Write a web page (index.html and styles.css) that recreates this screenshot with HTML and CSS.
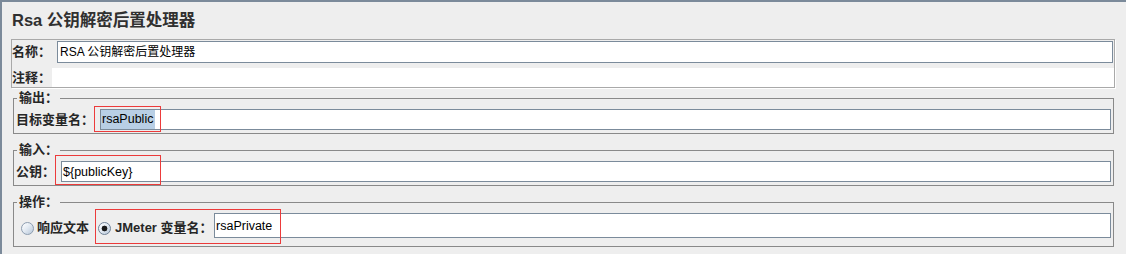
FILE: index.html
```html
<!DOCTYPE html>
<html lang="zh-CN">
<head>
<meta charset="utf-8">
<title>Rsa 公钥解密后置处理器</title>
<link rel="stylesheet" href="styles.css">
</head>
<body>
<div class="page">
  <h1 class="title">Rsa 公钥解密后置处理器</h1>

  <div class="name-panel">
    <div class="row row-name">
      <span class="lbl lbl-name">名称：</span>
      <div class="field field-name"><span class="val">RSA 公钥解密后置处理器</span></div>
    </div>
    <div class="row row-comment">
      <span class="lbl lbl-comment">注释：</span>
      <div class="comment"></div>
    </div>
  </div>

  <fieldset class="group group-first">
    <legend class="legend">输出：</legend>
    <div class="row">
      <span class="lbl lbl-target">目标变量名：</span>
      <div class="field field-sel"><span class="val sel">rsaPublic</span></div>
    </div>
  </fieldset>

  <fieldset class="group">
    <legend class="legend">输入：</legend>
    <div class="row">
      <span class="lbl lbl-key">公钥：</span>
      <div class="field"><span class="val">${publicKey}</span></div>
    </div>
  </fieldset>

  <fieldset class="group">
    <legend class="legend">操作：</legend>
    <div class="row row-op">
      <span class="radio radio-first"></span>
      <span class="lbl opt-text">响应文本</span>
      <span class="radio radio-checked radio-second"></span>
      <span class="lbl opt-text opt-var">JMeter 变量名：</span>
      <div class="field field-tall"><span class="val">rsaPrivate</span></div>
    </div>
  </fieldset>
</div>

<div class="mark mark-1"></div>
<div class="mark mark-2"></div>
<div class="mark mark-3"></div>
</body>
</html>
```

FILE: styles.css
```css
* { box-sizing: border-box; }

html, body {
  margin: 0;
  padding: 0;
}

body {
  width: 1126px;
  height: 254px;
  overflow: hidden;
  background: #eeeeee;
  border-top: 2px solid #7b8a9a;
  border-left: 2px solid #7b8a9a;
  font-family: "Liberation Sans", "Noto Sans CJK SC", sans-serif;
  color: #222;
}

.page {
  padding: 0 11px 0 9px;
}

.title {
  margin: 0;
  height: 37px;
  line-height: 37px;
  padding-left: 1px;
  font-size: 16.5px;
  font-weight: bold;
  color: #303030;
  white-space: nowrap;
}

.name-panel {
  border: 1px solid #a9a9a9;
  box-shadow: 1px 1px 0 #ffffff;
  padding-top: 1px;
}

.row {
  display: flex;
  align-items: center;
  height: 21px;
}

.row-name { height: 22px; }

.row-comment {
  height: 19px;
  margin-top: 5px;
}

.lbl {
  flex: none;
  font-size: 13px;
  font-weight: bold;
  line-height: 16px;
  color: #262626;
  white-space: nowrap;
}

.lbl-name { width: 45px; }
.lbl-comment { width: 40px; }
.lbl-target { width: 84px; }
.lbl-key { width: 45px; }

.field {
  flex: 1;
  height: 21px;
  display: flex;
  align-items: center;
  background: #ffffff;
  border: 1px solid #7b8b9b;
  padding-left: 1px;
  font-size: 12.5px;
  color: #000;
  white-space: nowrap;
  overflow: hidden;
}

.field-name {
  height: 22px;
  margin-right: 1px;
  padding-left: 2px;
  font-size: 12px;
}

.field-sel { padding-left: 0; }

.field-tall {
  height: 25px;
  align-self: flex-start;
}

.val { line-height: 16px; }

.sel {
  height: 19px;
  line-height: 19px;
  padding: 0 2px 0 1px;
  background: #b8cfe5;
}

.comment {
  flex: 1;
  height: 19px;
  background: #ffffff;
}

.group {
  margin: 8px 1px 0 2px;
  padding: 3px 2px 3px 2px;
  border: 1px solid #898989;
  min-width: 0;
}

.group-first { margin-top: 2px; }

.legend {
  margin-left: 1px;
  padding: 0 2px;
  font-size: 13px;
  font-weight: bold;
  line-height: 16px;
  color: #262626;
}

.row-op { height: 30px; }

.radio {
  flex: none;
  width: 13px;
  height: 13px;
  border-radius: 50%;
  border: 1px solid #8d9db0;
  background: linear-gradient(135deg, #ffffff 0%, #e4ebf3 45%, #b7c7d9 100%);
}

.radio-first { margin-left: 5px; }

.radio-checked {
  border-color: #6f8196;
  background:
    radial-gradient(circle at center, #1a1a1a 0 2.6px, transparent 3.2px),
    linear-gradient(135deg, #ffffff 0%, #e4ebf3 45%, #b7c7d9 100%);
}

.opt-text { margin-left: 3px; }

.radio-second { margin-left: 9px; }

.opt-var {
  margin-left: 4px;
  width: 99px;
}

.mark {
  position: absolute;
  border: 1px solid #ec3b3b;
  pointer-events: none;
}

.mark-1 { left: 94px; top: 106px; width: 67px; height: 26px; }
.mark-2 { left: 55px; top: 155px; width: 106px; height: 30px; }
.mark-3 { left: 95px; top: 209px; width: 186px; height: 35px; }
```
